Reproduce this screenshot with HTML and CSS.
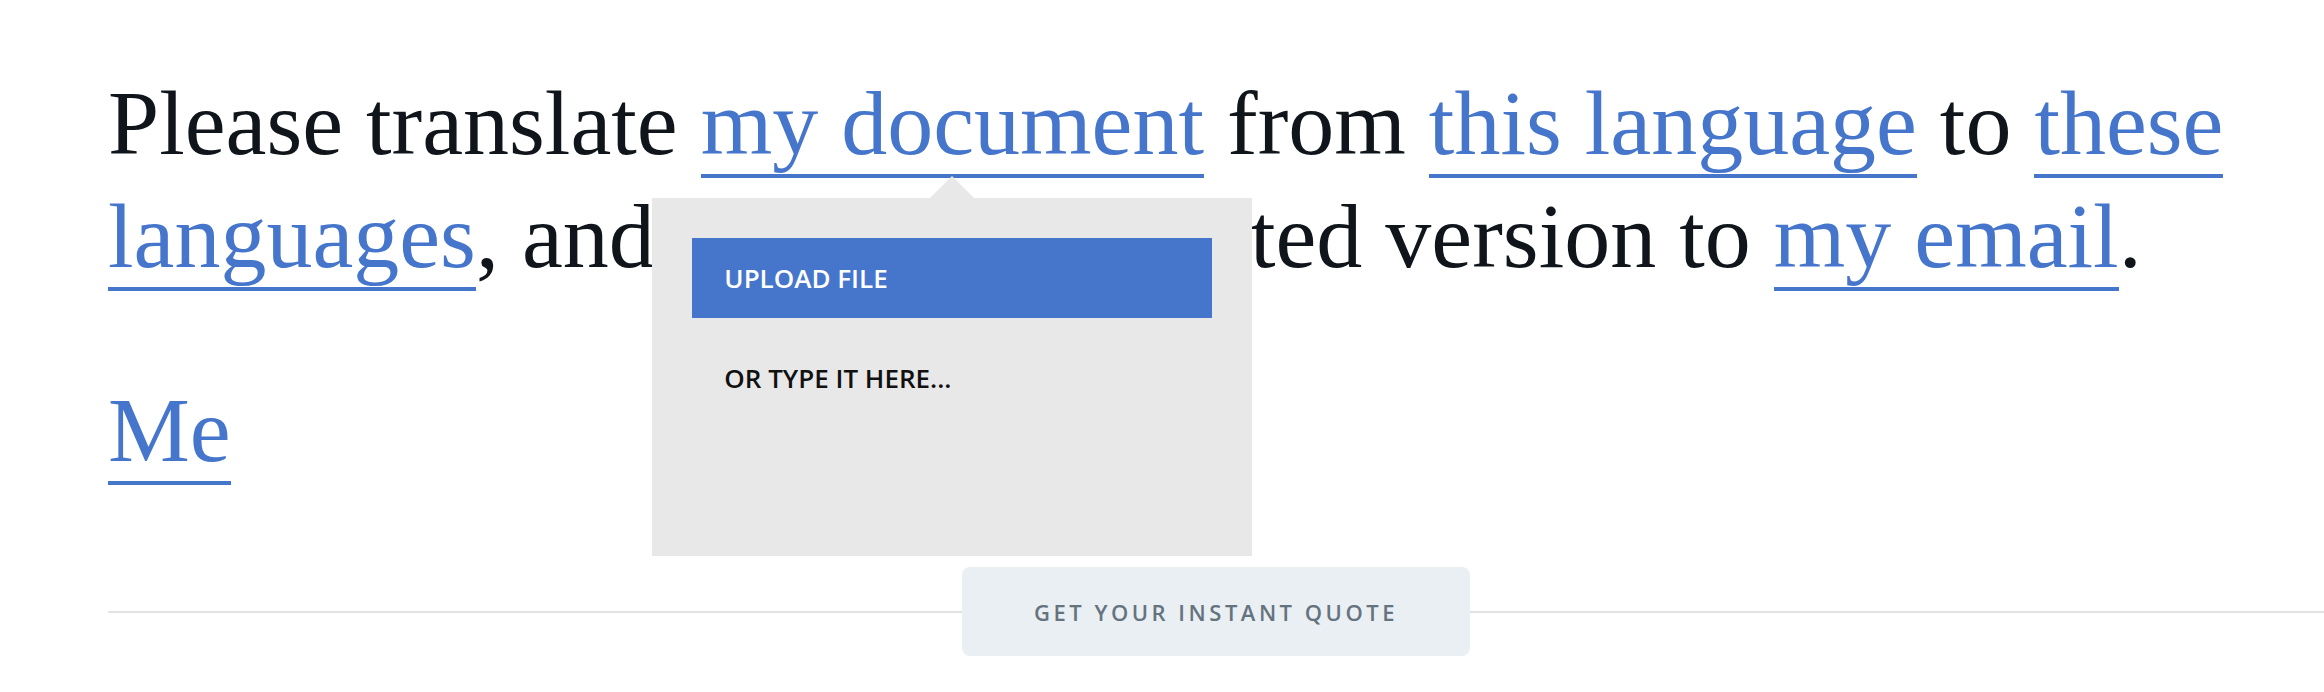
FILE: index.html
```html
<!DOCTYPE html>
<html lang="en">
<head>
    <meta charset="UTF-8">
    <meta name="viewport" content="width=device-width, initial-scale=1.0">
    <title>Translation Request</title>
    <link rel="stylesheet" href="styles.css">
</head>
<body>
    <div id="page">
        <!-- The request written as a letter, with editable fields -->
        <div id="letter">
            <p class="request">Please translate <span class="field field-open">my document<span class="popup">
                        <span class="popup-upload">Upload file</span>
                        <span class="popup-type">Or type it here...</span>
                    </span></span> from <span class="field">this language</span> to <span class="field">these languages</span>, and send the translated version to <span class="field">my email</span>.</p>
            <p class="signature"><span class="field">Me</span></p>
        </div>

        <!-- Quote button sitting on the divider -->
        <div id="actions">
            <button id="quoteBtn">Get your instant quote</button>
        </div>
    </div>
</body>
</html>
```

FILE: styles.css
```css
/* General page */
body {
    margin: 0;
    padding: 0;
    background-color: #fff;
    color: #10151b;
}

#page {
    padding: 67px 0 0 108px;
}

/* Letter text */
#letter {
    padding-right: 60px;
    font-family: 'Liberation Serif', 'Times New Roman', serif;
    font-size: 92px;
    line-height: 113px;
}

#letter p {
    margin: 0;
}

.request {
    margin-bottom: 81px !important;
}

/* Underlined blue fields */
.field {
    color: #4676cc;
    border-bottom: 4px solid #4676cc;
    cursor: pointer;
}

.field-open {
    position: relative;
}

/* Dropdown under "my document" */
.popup {
    position: absolute;
    top: calc(100% + 24px);
    left: 50%;
    transform: translateX(-50%);
    width: 520px;
    padding: 40px;
    background-color: #e8e8e8;
    font-family: 'Open Sans', 'Liberation Sans', sans-serif;
    font-size: 26px;
    font-weight: 600;
    line-height: 80px;
    text-transform: uppercase;
    cursor: default;
    z-index: 2;
}

.popup::before {
    content: "";
    position: absolute;
    top: -22px;
    left: 50%;
    margin-left: -22px;
    border-left: 22px solid transparent;
    border-right: 22px solid transparent;
    border-bottom: 22px solid #e8e8e8;
}

.popup span {
    display: block;
    padding: 0 32px;
}

.popup-upload {
    height: 80px;
    background-color: #4676cc;
    color: #fff;
}

.popup-type {
    height: 178px;
    margin-top: 20px;
    color: #111;
}

/* Divider with the quote button */
#actions {
    display: flex;
    align-items: center;
    margin-top: 80px;
}

#actions::before,
#actions::after {
    content: "";
    flex: 1;
    height: 2px;
    background-color: #e2e2e2;
}

#quoteBtn {
    width: 508px;
    height: 89px;
    border: none;
    border-radius: 8px;
    background-color: #eaeff3;
    color: #65737f;
    font-family: 'Open Sans', 'Liberation Sans', sans-serif;
    font-size: 22px;
    font-weight: 600;
    letter-spacing: 3.5px;
    text-transform: uppercase;
    cursor: pointer;
}
```
